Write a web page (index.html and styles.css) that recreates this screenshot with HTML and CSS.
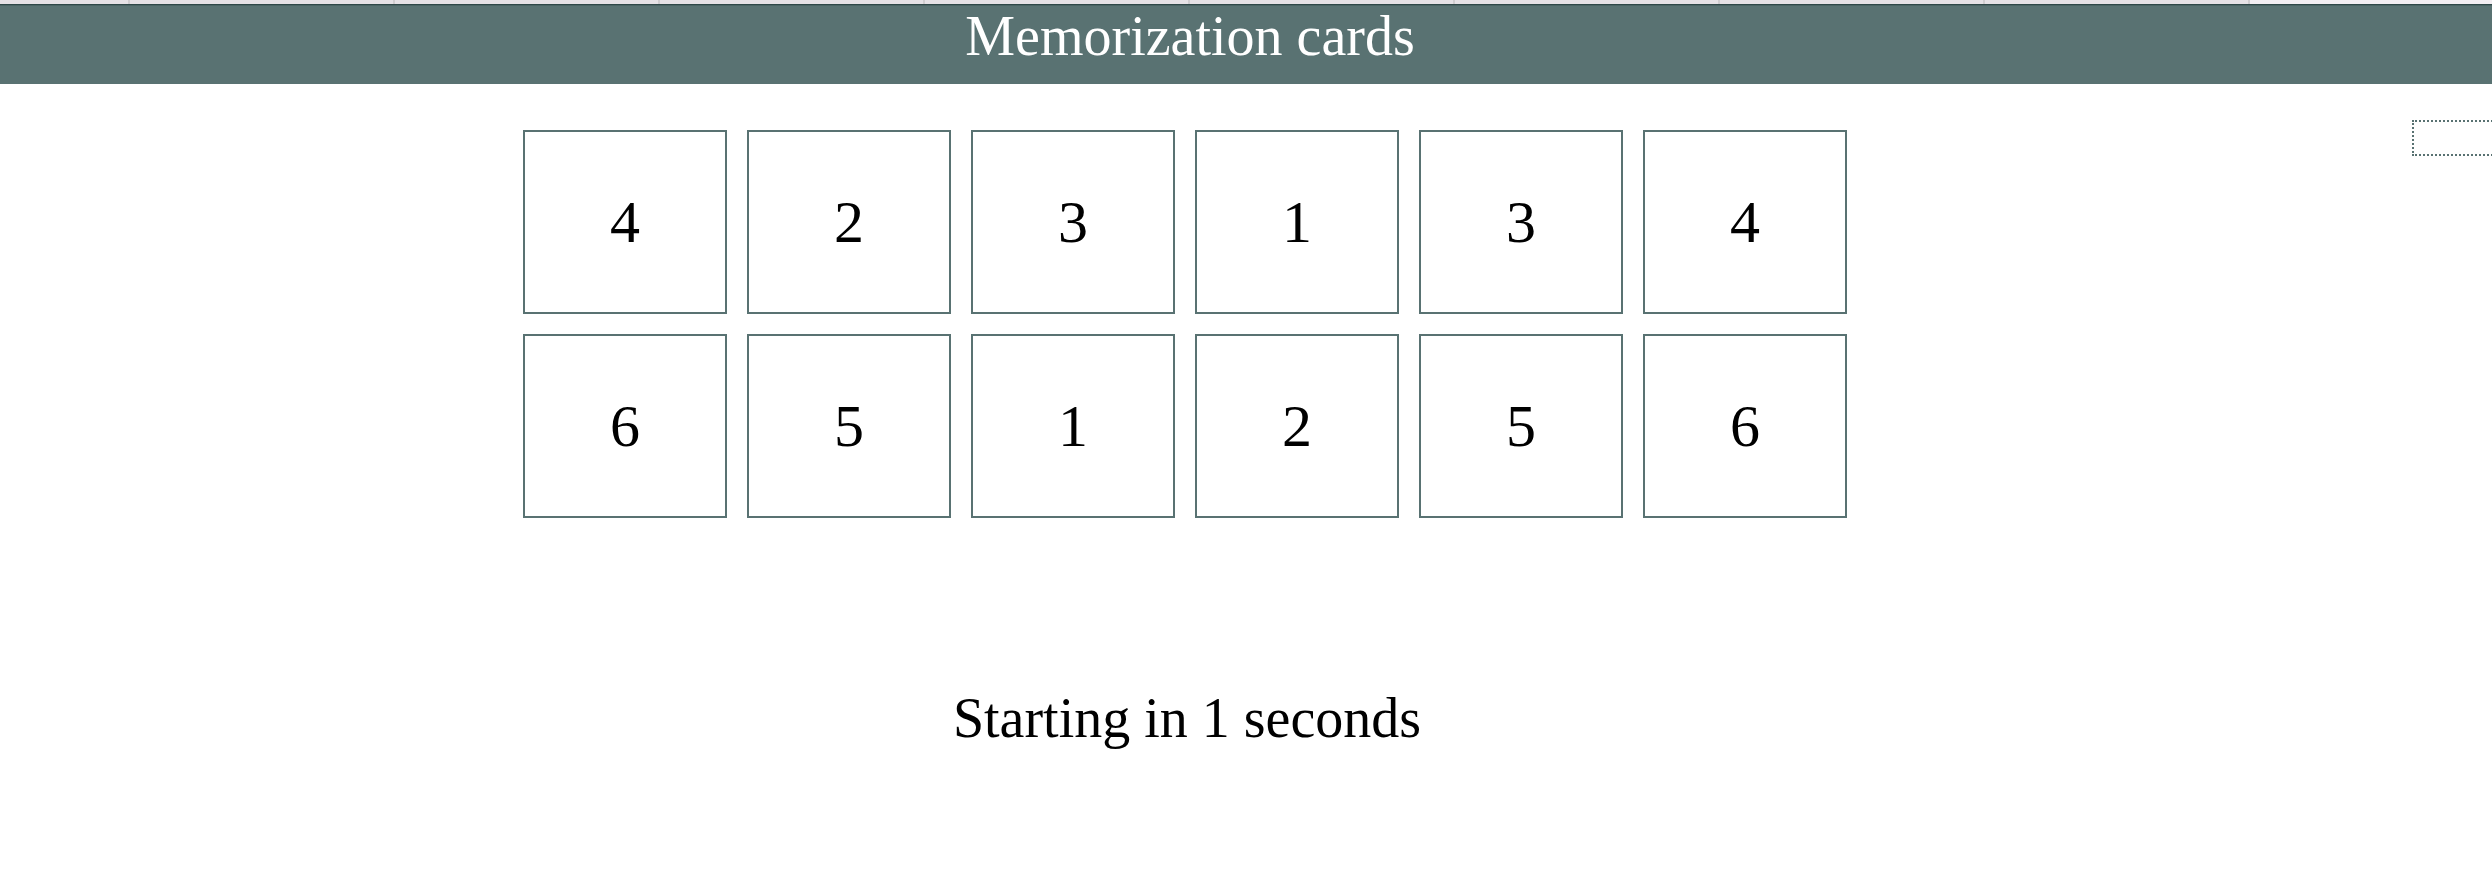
FILE: index.html
```html
<!DOCTYPE html>
<html lang="en">
<head>
  <meta charset="utf-8">
  <title>Memorization cards</title>
  <link rel="stylesheet" href="styles.css">
</head>
<body>
  <div class="tab-strip" aria-hidden="true">
    <span class="tab"></span>
    <span class="tab"></span>
    <span class="tab"></span>
    <span class="tab"></span>
    <span class="tab"></span>
    <span class="tab"></span>
    <span class="tab"></span>
    <span class="tab"></span>
    <span class="tab"></span>
    <span class="tab tab-active"></span>
  </div>
  <header class="header">
    <h1 class="title">Memorization cards</h1>
  </header>
  <div class="layout">
    <main class="game">
      <div class="board">
        <button class="card" type="button">4</button>
        <button class="card" type="button">2</button>
        <button class="card" type="button">3</button>
        <button class="card" type="button">1</button>
        <button class="card" type="button">3</button>
        <button class="card" type="button">4</button>
        <button class="card" type="button">6</button>
        <button class="card" type="button">5</button>
        <button class="card" type="button">1</button>
        <button class="card" type="button">2</button>
        <button class="card" type="button">5</button>
        <button class="card" type="button">6</button>
      </div>
      <p class="status" role="status">Starting in 1 seconds</p>
    </main>
    <aside class="side">
      <div class="score"></div>
    </aside>
  </div>
</body>
</html>
```

FILE: styles.css
```css
* {
  box-sizing: border-box;
}

body {
  margin: 0;
  background: #fff;
  color: #000;
  font-family: "Liberation Serif", "Times New Roman", serif;
}

.tab-strip {
  display: grid;
  grid-template-columns: 130px repeat(8, 1fr) 242px;
  height: 4px;
}

.tab {
  background: #e5e1e5;
  border-right: 2px solid #d0cdd0;
}

.tab-active {
  background: #f2eef2;
  border-right: 0;
}

.header {
  height: 80px;
  padding-right: 112px;
  background: #597272;
  border-top: 1px solid #2f4848;
  box-shadow: inset 0 1px #4a6464;
  text-align: center;
}

.title {
  margin: 0;
  color: #fff;
  font-size: 56px;
  font-weight: 400;
  line-height: 62px;
}

.layout {
  display: grid;
  grid-template-columns: 1fr 80px;
  column-gap: 42px;
  padding-top: 36px;
}

.game {
  padding-top: 10px;
}

.board {
  display: grid;
  grid-template-columns: repeat(6, 204px);
  gap: 20px;
  justify-content: center;
}

.card {
  height: 184px;
  padding: 0;
  border: 2px solid #597272;
  background: #fff;
  color: #000;
  font-family: inherit;
  font-size: 60px;
  line-height: 68px;
}

.status {
  margin: 168px 0 0;
  padding-left: 4px;
  font-size: 56px;
  line-height: 64px;
  text-align: center;
}

.side {
  overflow: hidden;
}

.score {
  width: 200px;
  height: 36px;
  border: 2px dotted #597272;
}
```
